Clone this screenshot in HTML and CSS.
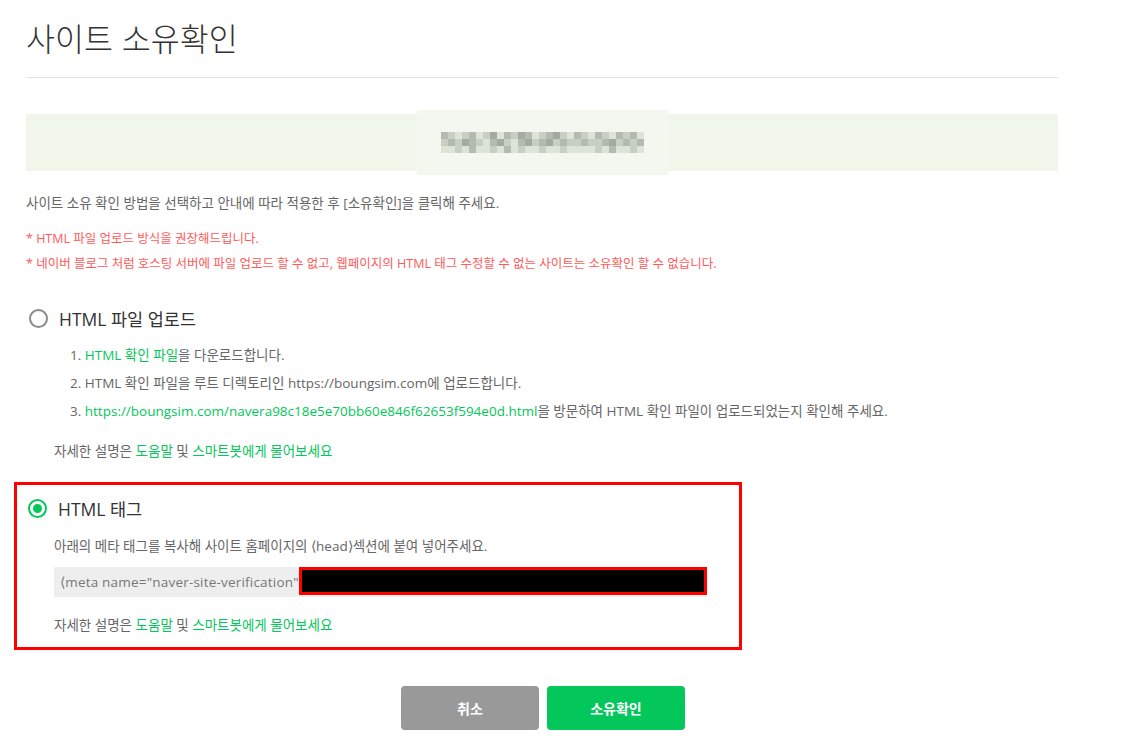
FILE: index.html
```html
<!DOCTYPE html>
<html lang="ko">
<head>
<meta charset="utf-8">
<title>사이트 소유확인</title>
<link rel="stylesheet" href="styles.css">
</head>
<body>
<div class="page">
  <h1 class="title">사이트 소유확인</h1>

  <div class="site-bar">
    <div class="mosaic">
      <div class="mrow"><i class="c2"></i><i class="c1"></i><i class="c3"></i><i class="c1"></i><i class="c2"></i><i class="c3"></i><i class="c1"></i><i class="c4"></i><i class="c3"></i><i class="c2"></i><i class="c1"></i><i class="c4"></i><i class="c2"></i><i class="c3"></i><i class="c1"></i><i class="c2"></i><i class="c4"></i><i class="c1"></i><i class="c3"></i><i class="c2"></i><i class="c1"></i><i class="c3"></i><i class="c2"></i><i class="c1"></i><i class="c3"></i><i class="c2"></i><i class="c1"></i><i class="c2"></i><i class="c3"></i></div>
      <div class="mrow"><i class="c1"></i><i class="c2"></i><i class="c1"></i><i class="c4"></i><i class="c2"></i><i class="c1"></i><i class="c3"></i><i class="c2"></i><i class="c4"></i><i class="c1"></i><i class="c3"></i><i class="c2"></i><i class="c4"></i><i class="c1"></i><i class="c2"></i><i class="c4"></i><i class="c1"></i><i class="c2"></i><i class="c1"></i><i class="c1"></i><i class="c2"></i><i class="c1"></i><i class="c1"></i><i class="c2"></i><i class="c4"></i><i class="c1"></i><i class="c2"></i><i class="c1"></i><i class="c2"></i></div>
      <div class="mrow"><i class="c3"></i><i class="c3"></i><i class="c1"></i><i class="c3"></i><i class="c2"></i><i class="c3"></i><i class="c3"></i><i class="c1"></i><i class="c3"></i><i class="c2"></i><i class="c3"></i><i class="c1"></i><i class="c3"></i><i class="c3"></i><i class="c1"></i><i class="c3"></i><i class="c3"></i><i class="c1"></i><i class="c3"></i><i class="c3"></i><i class="c3"></i><i class="c3"></i><i class="c1"></i><i class="c3"></i><i class="c2"></i><i class="c3"></i><i class="c3"></i><i class="c1"></i><i class="c3"></i></div>
    </div>
  </div>

  <p class="desc">사이트 소유 확인 방법을 선택하고 안내에 따라 적용한 후 [소유확인]을 클릭해 주세요.</p>
  <div class="notice">
    <p>* HTML 파일 업로드 방식을 권장해드립니다.</p>
    <p>* 네이버 블로그 처럼 호스팅 서버에 파일 업로드 할 수 없고, 웹페이지의 HTML 태그 수정할 수 없는 사이트는 소유확인 할 수 없습니다.</p>
  </div>

  <section class="option">
    <div class="option-head">
      <span class="radio"></span>
      <span class="option-label">HTML 파일 업로드</span>
    </div>
    <ol class="steps">
      <li>1. <a class="link">HTML 확인 파일</a>을 다운로드합니다.</li>
      <li>2. HTML 확인 파일을 루트 디렉토리인 https://boungsim.com에 업로드합니다.</li>
      <li>3. <a class="link">https://boungsim.com/navera98c18e5e70bb60e846f62653f594e0d.html</a>을 방문하여 HTML 확인 파일이 업로드되었는지 확인해 주세요.</li>
    </ol>
    <p class="help">자세한 설명은 <a class="link">도움말</a> 및 <a class="link">스마트봇에게 물어보세요</a></p>
  </section>

  <section class="option option-selected">
    <div class="option-head">
      <span class="radio radio-on"></span>
      <span class="option-label">HTML 태그</span>
    </div>
    <p class="tag-desc">아래의 메타 태그를 복사해 사이트 홈페이지의 &lang;head&rang;섹션에 붙여 넣어주세요.</p>
    <div class="code">
      <span class="code-text">&lang;meta name="naver-site-verification"</span>
      <span class="redact"></span>
    </div>
    <p class="help help-tag">자세한 설명은 <a class="link">도움말</a> 및 <a class="link">스마트봇에게 물어보세요</a></p>
  </section>

  <div class="actions">
    <button class="btn btn-cancel">취소</button>
    <button class="btn btn-ok">소유확인</button>
  </div>
</div>
</body>
</html>
```

FILE: styles.css
```css
* { box-sizing: border-box; }

body {
  margin: 0;
  background: #fff;
  font-family: "Open Sans", "Noto Sans CJK KR", sans-serif;
  color: #666;
}

.page {
  width: 1084px;
  padding: 0 26px;
}

p { margin: 0; }

.title {
  margin: 0;
  padding-top: 17px;
  padding-bottom: 20px;
  line-height: 40px;
  font-family: "Noto Sans CJK KR", sans-serif;
  font-size: 31.5px;
  font-weight: 300;
  color: #333;
  border-bottom: 1px solid #e3e3e3;
}

.site-bar {
  margin-top: 36px;
  height: 57px;
  background: #f0f6ea;
  display: flex;
  justify-content: center;
  align-items: center;
}

.mosaic {
  width: 251px;
  height: 65px;
  background: #f3f7f0;
  display: flex;
  flex-direction: column;
  justify-content: center;
  padding-left: 24px;
}

.mrow { display: flex; height: 7px; }
.mrow i { display: block; width: 7px; height: 7px; }
.c1 { background: #c9cec3; }
.c2 { background: #b4bab0; }
.c3 { background: #dde3d6; }
.c4 { background: #a4aaa0; }

.desc {
  margin-top: 22px;
  font-size: 13.5px;
  line-height: 20px;
}

.notice {
  margin-top: 13px;
  color: #ff5a5a;
  font-size: 12.5px;
  line-height: 25px;
}

.option { margin-top: 29px; }

.option-head {
  display: flex;
  align-items: center;
  height: 26px;
}

.radio {
  width: 19px;
  height: 19px;
  border: 2px solid #8a8a8a;
  border-radius: 50%;
  margin-left: 3px;
  margin-right: 11px;
  flex: none;
}

.radio-on {
  border-color: #03c75a;
  display: flex;
  align-items: center;
  justify-content: center;
  margin-left: 0;
}
.radio-on::after {
  content: "";
  width: 9px;
  height: 9px;
  border-radius: 50%;
  background: #03c75a;
}

.option-label {
  font-size: 17.5px;
  color: #333;
}

.steps {
  list-style: none;
  margin: 10px 0 0;
  padding: 0 0 0 44px;
  font-size: 13.5px;
  line-height: 28px;
}

.link { color: #03c75a; text-decoration: none; }

.help {
  margin-top: 16px;
  padding-left: 28px;
  font-size: 13.5px;
  line-height: 20px;
}

.option-selected {
  margin-top: 21px;
  margin-left: -12px;
  width: 728px;
  border: 3px solid #ff0000;
  padding: 10px 0 12px 11px;
}

.tag-desc {
  margin-top: 15px;
  padding-left: 26px;
  font-size: 13.5px;
  line-height: 20px;
}

.code {
  margin: 11px 0 0 26px;
  width: 652px;
  height: 30px;
  background: #eeeeee;
  display: flex;
  align-items: flex-start;
  padding-left: 6px;
}

.code-text {
  font-size: 13.5px;
  letter-spacing: 0.2px;
  line-height: 30px;
  color: #777;
  white-space: nowrap;
  flex: none;
}

.redact {
  flex: 1;
  height: 28px;
  background: #000;
  border: 3px solid #ff0000;
  margin-right: -1px;
}

.help-tag { margin-top: 18px; padding-left: 26px; }

.actions {
  margin-top: 36px;
  padding-left: 2px;
  display: flex;
  justify-content: center;
  gap: 8px;
}

.btn {
  width: 138px;
  height: 44px;
  border: none;
  border-radius: 4px;
  color: #fff;
  font-family: "Noto Sans CJK KR", sans-serif;
  font-size: 14px;
  font-weight: 700;
}
.btn-cancel { background: #999999; }
.btn-ok { background: #03c75a; }
```
